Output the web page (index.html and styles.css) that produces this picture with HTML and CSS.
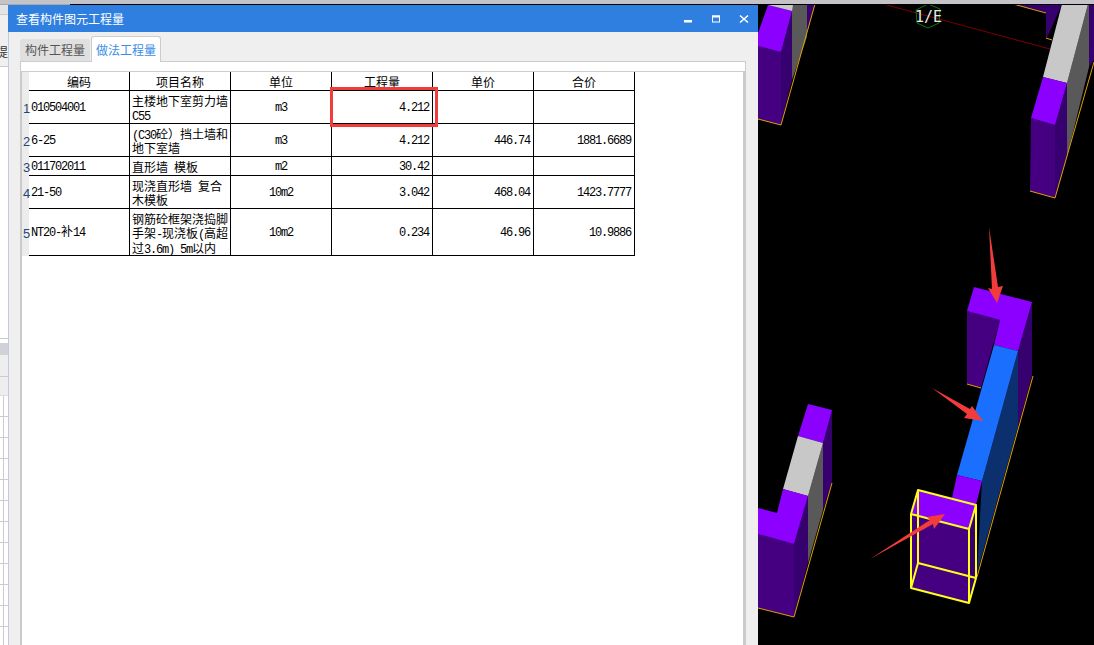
FILE: index.html
```html
<!DOCTYPE html>
<html>
<head>
  <title>查看构件图元工程量</title>
  <meta charset="utf-8">
  <link rel="stylesheet" href="styles.css">
</head>
<body>
  <div class="topbar">
    <div class="topbar-fill"></div>
    <div class="topbar-line"><span class="line-light"></span><span class="line-dark"></span></div>
  </div>
  <div class="desk">
    <div class="behind">
      <div class="behind-head"></div>
      <div class="behind-tool"><span class="behind-char">提</span></div>
      <div class="behind-white"></div>
      <div class="behind-band"></div>
      <div class="behind-gap"></div>
      <div class="behind-cell"></div>
      <div class="behind-grid"></div>
    </div>

    <div class="dialog">
      <div class="titlebar">
        <span class="title-text">查看构件图元工程量</span>
        <div class="win-btns">
          <svg class="win-btn" viewBox="0 0 12 12"><rect x="2" y="7" width="8" height="2.5" fill="#fff"/></svg>
          <svg class="win-btn" viewBox="0 0 12 12"><rect x="2.5" y="3" width="7" height="6" fill="none" stroke="#fff" stroke-width="1"/><rect x="2" y="2.5" width="8" height="2" fill="#fff"/></svg>
          <svg class="win-btn" viewBox="0 0 12 12"><path d="M2 2.5 L10 9.5 M10 2.5 L2 9.5" stroke="#fff" stroke-width="1.6" fill="none"/></svg>
        </div>
      </div>
      <div class="dialog-body">
        <div class="tabs">
          <div class="tab">构件工程量</div>
          <div class="tab tab-active">做法工程量</div>
        </div>
        <div class="panel">
          <div class="panel-strip"></div>
          <div class="sheet">
            <table class="qty">
              <colgroup>
                <col class="col-num"><col class="col-data"><col class="col-data"><col class="col-data"><col class="col-data"><col class="col-data"><col class="col-data">
              </colgroup>
              <tr class="row-s">
                <th class="gutter"></th><th>编码</th><th>项目名称</th><th>单位</th><th>工程量</th><th>单价</th><th>合价</th>
              </tr>
              <tr class="row-m">
                <td class="gutter">1</td>
                <td>010504001</td>
                <td class="name">主楼地下室剪力墙<br><span class="lat">C55</span></td>
                <td class="mid">m3</td>
                <td class="num marked">4.212<div class="red-box"></div></td>
                <td class="num"></td>
                <td class="num"></td>
              </tr>
              <tr class="row-m">
                <td class="gutter">2</td>
                <td>6-25</td>
                <td class="name"><span class="lat">(C30</span>砼）挡土墙和<br>地下室墙</td>
                <td class="mid">m3</td>
                <td class="num">4.212</td>
                <td class="num">446.74</td>
                <td class="num">1881.6689</td>
              </tr>
              <tr class="row-s">
                <td class="gutter">3</td>
                <td>011702011</td>
                <td class="name">直形墙<span class="lat">&nbsp;</span>模板</td>
                <td class="mid">m2</td>
                <td class="num">30.42</td>
                <td class="num"></td>
                <td class="num"></td>
              </tr>
              <tr class="row-m">
                <td class="gutter">4</td>
                <td>21-50</td>
                <td class="name">现浇直形墙<span class="lat">&nbsp;</span>复合<br>木模板</td>
                <td class="mid">10m2</td>
                <td class="num">3.042</td>
                <td class="num">468.04</td>
                <td class="num">1423.7777</td>
              </tr>
              <tr class="row-l">
                <td class="gutter">5</td>
                <td>NT20-<span class="cn">补</span>14</td>
                <td class="name">钢筋砼框架浇捣脚<br>手架<span class="lat">-</span>现浇板<span class="lat">(</span>高超<br>过<span class="lat">3.6m)&nbsp;5m</span>以内</td>
                <td class="mid">10m2</td>
                <td class="num">0.234</td>
                <td class="num">46.96</td>
                <td class="num">10.9886</td>
              </tr>
            </table>
          </div>
        </div>
      </div>
    </div>

    <svg class="scene" viewBox="758 5 336 640">
      <!-- axis line and marker -->
      <path class="axis" d="M883 4 L1050 49"/>
      <polygon class="marker" points="928,4 940,9 939,23 928,28 917,23 916,10"/>
      <text class="marker-text" x="915" y="22">1/E</text>

      <!-- top left column -->
      <polygon class="side" points="807,4 815,4 807,33"/>
      <polygon class="grey-side" points="792,4 807,4 807,37 792,80"/>
      <polygon class="side" points="781,52 792,11 792,80 781,125"/>
      <polygon class="front" points="758,46 781,52 781,125 758,119"/>
      <polygon class="top" points="768,5 792,11 781,52 758,46 758,33"/>
      <polygon class="grey-top" points="768,5 793,5 792,11"/>
      <path class="edge" d="M815 4 L781 125 L758 119"/>

      <!-- top right column -->
      <polygon class="side" points="1013,4 1062,4 1046,40 1046,13"/>
      <path class="edge" d="M1013 4 L1046 13 M1046 38 L1052 40"/>
      <polygon class="side" points="1089,4 1094,4 1094,60 1089,67"/>
      <polygon class="grey-side" points="1067,83 1088,4 1089,4 1089,67 1067,157"/>
      <polygon class="side" points="1055,125 1067,83 1067,157 1055,198"/>
      <polygon class="front" points="1031,118 1055,125 1055,198 1030,191"/>
      <polygon class="grey-top" points="1062,4 1088,4 1067,83 1043,77"/>
      <polygon class="top" points="1043,77 1067,83 1055,125 1031,118"/>
      <path class="edge" d="M1094 62 L1055 198 L1030 191"/>

      <!-- lower left column -->
      <polygon class="side" points="823,443 832,410 832,483 823,510"/>
      <polygon class="grey-side" points="808,496 823,443 823,510 808,563"/>
      <polygon class="side" points="794,544 808,496 808,563 794,617"/>
      <polygon class="front" points="758,534 794,544 794,617 758,608"/>
      <polygon class="top" points="808,404 832,410 823,443 798,436"/>
      <polygon class="grey-top" points="798,436 823,443 808,496 783,489"/>
      <polygon class="top" points="783,489 808,496 794,544 758,534 758,508 777,513"/>
      <path class="edge" d="M832 483 L794 617 L758 608"/>

      <!-- middle wall -->
      <polygon class="side" points="1018,351 1032,302 1032,376 1018,427"/>
      <polygon class="front" points="967,311 1000,320 981,388 967,384"/>
      <polygon class="blue-side" points="1018,351 1018,427 977,573 982,481"/>
      <polygon class="top" points="974,287 1032,302 1018,351 994,345 1000,320 967,311"/>
      <polygon class="blue-top" points="994,345 1018,351 982,481 957,475"/>
      <polygon class="top" points="957,475 982,481 976,505 952,498"/>
      <path class="edge" d="M967 384 L981 388 M1033 376 L977 577"/>

      <!-- selected block -->
      <polygon class="side" points="969,529 976,505 976,578 969,603"/>
      <polygon class="front" points="911,514 969,529 969,603 911,588"/>
      <polygon class="top" points="918,490 976,505 969,529 911,514"/>
      <path class="wire" d="M918 490 L976 505 L969 529 L911 514 Z M918 563 L976 578 L969 603 L911 588 Z M918 490 L918 563 M976 505 L976 578 M969 529 L969 603 M911 514 L911 588"/>

      <!-- arrows -->
      <polygon class="arrow" points="989,227 998,287 1003,286 997,303 988,288 992,289"/>
      <polygon class="arrow" points="932,388 970,409 972,406 983,421 964,418 967,414"/>
      <polygon class="arrow" points="870,559 930,520 927,517 945,514 934,529 933,524"/>
    </svg>
  </div>
</body>
</html>
```

FILE: styles.css
```css
html, body { margin: 0; padding: 0; }
body {
  width: 1094px; height: 645px; overflow: hidden;
  font-family: "Liberation Mono", "Noto Sans CJK SC", monospace;
  font-size: 12px; color: #000; background: #fff;
}

.topbar { height: 5px; }
.topbar-fill { height: 4px; background: #c4c4c8; }
.topbar-line { display: flex; height: 1px; }
.line-light { width: 70px; background: #a8a8a8; }
.line-dark { flex: 1; background: #000; }

.desk { display: flex; height: 640px; }

/* window sitting behind the dialog */
.behind { width: 8px; display: flex; flex-direction: column; overflow: hidden; background: #fff; }
.behind-head { height: 9px; background: #e4e4e4; border-bottom: 1px solid #ccc; }
.behind-tool { height: 51px; background: #f0f0f0; border-bottom: 1px solid #ccc; overflow: hidden; }
.behind-char {
  display: block; margin: 29px 0 0 -4px; width: 14px; line-height: 16px;
  font-family: "Noto Sans CJK SC", sans-serif; font-size: 12px; color: #333;
}
.behind-white { height: 271px; border-bottom: 1px solid #ccc; box-sizing: content-box; }
.behind-band { height: 12px; margin-top: 4px; background: #d0d2d8; }
.behind-gap { height: 22px; background: #eee; border-bottom: 1px solid #ccc; box-sizing: border-box; }
.behind-cell { height: 19px; background: #eee; border-bottom: 1px solid #ddd; box-sizing: border-box; }
.behind-grid {
  flex: 1; margin-right: 0;
  background:
    linear-gradient(#ccc, #ccc) 3px 0 / 1px 100% no-repeat,
    repeating-linear-gradient(#fff 0, #fff 20px, #ccc 20px, #ccc 21px);
}

.dialog {
  width: 750px; display: flex; flex-direction: column; box-sizing: border-box;
  border-left: 1px solid #c4cbdc; background: #efefef;
}
.titlebar {
  height: 27px; flex: none; display: flex; align-items: center; justify-content: space-between;
  margin-left: -1px; padding: 0 8px 0 8px; background: #2e7fe0; color: #fff;
}
.title-text { font-family: "Noto Sans CJK SC", sans-serif; font-size: 12px; line-height: 27px; }
.win-btns { display: flex; gap: 16px; }
.win-btn { width: 12px; height: 12px; display: block; }

.dialog-body { flex: 1; min-height: 0; display: flex; flex-direction: column; padding: 4px 12px 0 11px; }

.tabs { height: 26px; flex: none; display: flex; align-items: flex-end; gap: 1px; position: relative; z-index: 1; }
.tab {
  width: 70px; height: 22px; box-sizing: border-box; text-align: center;
  font-family: "Noto Sans CJK SC", sans-serif; font-size: 12px; line-height: 22px; color: #555;
  background: #e0e0e0; border-radius: 3px 3px 0 0; margin-bottom: 1px;
}
.tab-active {
  height: 26px; line-height: 26px; color: #3a8ee6; background: #fff; margin-bottom: 0;
  border: 1px solid #ccc; border-bottom: none;
}

.panel {
  flex: 1; min-height: 0; margin-top: -1px; display: flex; flex-direction: column;
  background: #fff; border: 1px solid #ccc; border-bottom: none;
}
.panel-strip { height: 9px; flex: none; }
.sheet {
  flex: 1; min-height: 0; border-top: 1px solid #ccc; border-left: 1px solid #c8c8c8; border-right: 2px solid #c8cbd0;
}

.qty { border-collapse: separate; border-spacing: 0; table-layout: fixed; width: 613px; }
.col-num { width: 7px; }
.col-data { width: 101px; }
.row-s { height: 19px; }
.row-m { height: 33px; }
.row-l { height: 47px; }
.qty th, .qty td {
  box-sizing: border-box; padding: 3px 0 0 2px; white-space: nowrap;
  border-right: 1px solid #000; border-bottom: 1px solid #000;
  line-height: 14.5px; vertical-align: middle; text-align: left;
  font-family: "Liberation Mono", monospace; font-size: 12px; letter-spacing: -1.2px;
}
.qty th {
  padding: 1px 0 0; text-align: center; font-weight: normal; letter-spacing: 0;
  font-family: "Noto Sans CJK SC", sans-serif; font-size: 12px; line-height: 14px;
}
.qty .name { font-family: "Noto Sans CJK SC", sans-serif; letter-spacing: 0; padding-top: 2.5px; }
.lat { font-family: "Liberation Mono", monospace; letter-spacing: -1.2px; line-height: 0; }
.cn { font-family: "Noto Sans CJK SC", sans-serif; letter-spacing: 0; line-height: 0; }
.qty .gutter {
  padding: 3px 0 0 1px; border: none; background: #ececec; color: #1f4478; letter-spacing: 0;
  font-family: "Liberation Sans", sans-serif; font-size: 13px; overflow: visible;
}
.qty .mid { text-align: center; padding: 3px 0 0; }
.qty .num { text-align: right; padding: 3px 3px 0 0; }
.marked { position: relative; }
.red-box {
  position: absolute; left: -2px; top: -4px; width: 108px; height: 40px; box-sizing: border-box;
  border: 3px solid #f23c3c;
}

.scene { width: 336px; height: 640px; display: block; background: #000; flex: none; }
.top { fill: #8b00ff; }
.front { fill: #440080; }
.side { fill: #36006e; }
.grey-top { fill: #c8c8c8; }
.grey-side { fill: #595959; }
.blue-top { fill: #1a6fff; }
.blue-side { fill: #0c2f6e; }
.edge { fill: none; stroke: #e0a000; stroke-width: 1; }
.wire { fill: none; stroke: #ffff1a; stroke-width: 2; stroke-linejoin: round; }
.axis { fill: none; stroke: #7a0000; stroke-width: 1; }
.marker { fill: none; stroke: #0a7a0a; stroke-width: 1; }
.marker-text { font-family: "DejaVu Sans Mono", monospace; font-size: 15px; fill: #e8e8e8; }
.arrow { fill: #f23c3c; }
```
